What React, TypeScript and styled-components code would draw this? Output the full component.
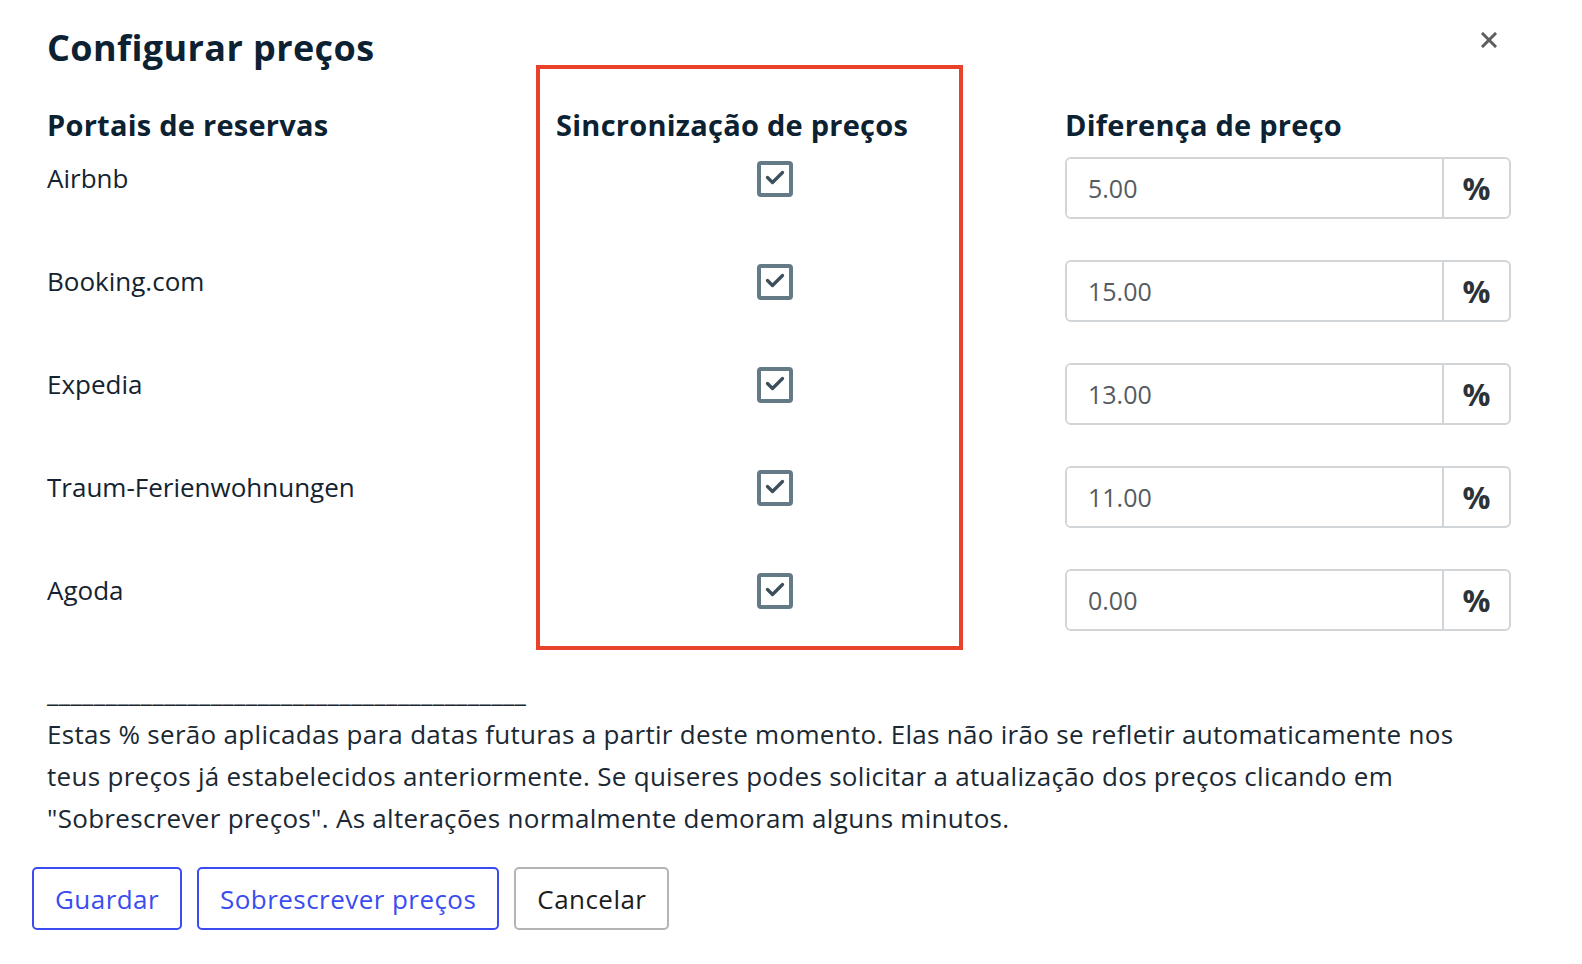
import React from "react";
import styled, { createGlobalStyle } from "styled-components";

const GlobalStyle = createGlobalStyle`
  * { box-sizing: border-box; }
  body {
    margin: 0;
    background: #fff;
    font-family: "Open Sans", "Lato", sans-serif;
    color: #14232f;
  }
`;

const Page = styled.div`
  position: relative;
  padding: 28px 71px 0 47px;
`;

const Title = styled.h1`
  margin: 0;
  height: 37px;
  font-size: 36px;
  line-height: 40px;
  font-weight: 700;
  letter-spacing: 0.4px;
  color: #0c2233;
`;

const CloseBtn = styled.button`
  position: absolute;
  top: 26px;
  right: 79px;
  width: 28px;
  height: 28px;
  border: none;
  background: transparent;
  padding: 0;
  cursor: pointer;
  display: flex;
  align-items: center;
  justify-content: center;
`;

const Columns = styled.div`
  display: flex;
  align-items: flex-start;
`;

const Column = styled.div<{ $width: number; $framed?: boolean; $offset?: number }>`
  width: ${(p) => p.$width}px;
  flex-shrink: 0;
  margin-left: ${(p) => p.$offset ?? 0}px;
  display: flex;
  flex-direction: column;
  gap: 41px;
  padding: ${(p) => (p.$framed ? "39px 16px 15px 16px" : "43px 0 0 0")};
  border: ${(p) => (p.$framed ? "4px solid #e8432a" : "none")};
`;

const Header = styled.h2`
  margin: 0 0 -26px 0;
  height: 34px;
  font-size: 29px;
  line-height: 34px;
  font-weight: 700;
  letter-spacing: 0.25px;
  color: #0c2233;
  white-space: nowrap;
`;

const Row = styled.div`
  height: 62px;
  display: flex;
  align-items: flex-start;
`;

const PortalName = styled.span`
  font-size: 26px;
  line-height: 42px;
  color: #14232f;
`;

const CheckRow = styled(Row)`
  padding-left: 201px;
  padding-top: 4px;
`;

const CheckBox = styled.span`
  width: 36px;
  height: 36px;
  border: 4px solid #647a87;
  border-radius: 4px;
  display: flex;
  background: #fff;
`;

const InputGroup = styled.div`
  width: 100%;
  height: 62px;
  display: flex;
  border: 2px solid #d2d5d8;
  border-radius: 6px;
  overflow: hidden;
`;

const PriceInput = styled.input`
  flex: 1;
  min-width: 0;
  border: none;
  outline: none;
  padding: 0 0 0 21px;
  font-family: inherit;
  font-size: 25px;
  color: #555b60;
  background: #fff;
`;

const Addon = styled.span`
  width: 67px;
  border-left: 2px solid #d2d5d8;
  display: flex;
  align-items: center;
  justify-content: center;
  font-size: 31px;
  font-weight: 700;
  color: #2c3338;
`;

const Note = styled.p`
  margin: 21px 0 0 0;
  font-size: 26px;
  line-height: 42px;
  letter-spacing: 0.3px;
  color: #1a2833;
  white-space: nowrap;
`;

const Actions = styled.div`
  display: flex;
  gap: 15px;
  margin: 28px 0 0 -15px;
`;

const Button = styled.button<{ $variant?: "primary" | "default" }>`
  height: 63px;
  padding: 0 21px;
  font-family: inherit;
  font-size: 26px;
  letter-spacing: 0.45px;
  background: #fff;
  border-radius: 5px;
  cursor: pointer;
  border: 2px solid ${(p) => (p.$variant === "primary" ? "#3a4cf0" : "#b4b4b4")};
  color: ${(p) => (p.$variant === "primary" ? "#3a4cf0" : "#1c1c1c")};
`;

const portals = [
  { name: "Airbnb", value: "5.00" },
  { name: "Booking.com", value: "15.00" },
  { name: "Expedia", value: "13.00" },
  { name: "Traum-Ferienwohnungen", value: "11.00" },
  { name: "Agoda", value: "0.00" },
];

function Check() {
  return (
    <CheckBox>
      <svg width="28" height="28" viewBox="0 0 28 28">
        <path d="M6.5 12.5 L11.5 17.5 L21.5 7.5" fill="none" stroke="#3d4f5b" strokeWidth="3.3" strokeLinecap="round" strokeLinejoin="round" />
      </svg>
    </CheckBox>
  );
}

export default function App() {
  return (
    <Page>
      <GlobalStyle />
      <Title>Configurar preços</Title>
      <CloseBtn aria-label="Fechar">
        <svg width="16" height="16" viewBox="0 0 16 16">
          <path d="M2 2 L14 14 M14 2 L2 14" stroke="#5e5e5e" strokeWidth="3" strokeLinecap="square" />
        </svg>
      </CloseBtn>
      <Columns>
        <Column $width={489}>
          <Header>Portais de reservas</Header>
          {portals.map((p) => (
            <Row key={p.name}>
              <PortalName>{p.name}</PortalName>
            </Row>
          ))}
        </Column>
        <Column $width={427} $framed>
          <Header>Sincronização de preços</Header>
          {portals.map((p) => (
            <CheckRow key={p.name}>
              <Check />
            </CheckRow>
          ))}
        </Column>
        <Column $width={446} $offset={102}>
          <Header>Diferença de preço</Header>
          {portals.map((p) => (
            <Row key={p.name}>
              <InputGroup>
                <PriceInput defaultValue={p.value} />
                <Addon>%</Addon>
              </InputGroup>
            </Row>
          ))}
        </Column>
      </Columns>
      <Note>
        _________________________________________
        <br />
        Estas % serão aplicadas para datas futuras a partir deste momento. Elas não irão se refletir automaticamente nos
        <br />
        teus preços já estabelecidos anteriormente. Se quiseres podes solicitar a atualização dos preços clicando em
        <br />
        "Sobrescrever preços". As alterações normalmente demoram alguns minutos.
      </Note>
      <Actions>
        <Button $variant="primary">Guardar</Button>
        <Button $variant="primary">Sobrescrever preços</Button>
        <Button>Cancelar</Button>
      </Actions>
    </Page>
  );
}
